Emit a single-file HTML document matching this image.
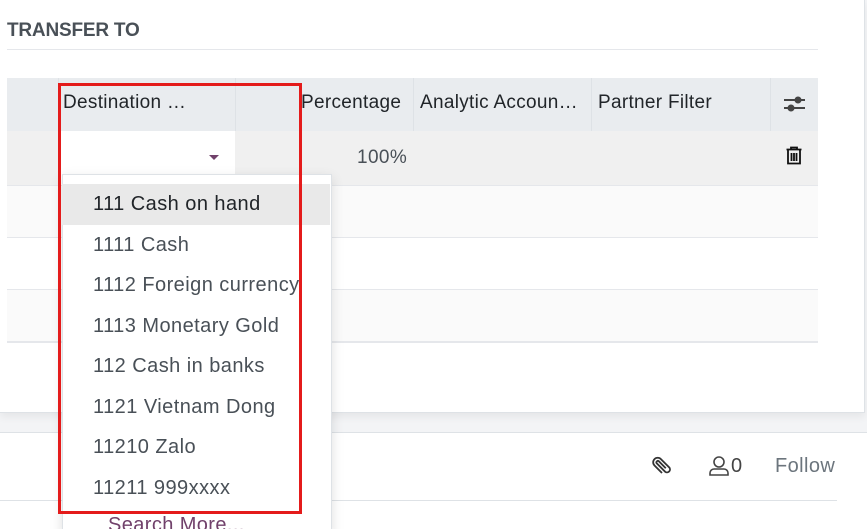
<!DOCTYPE html><html><head><style>
html,body{margin:0;width:867px;height:529px;overflow:hidden}
body{background:#f3f4f6;font-family:"Liberation Sans",sans-serif;position:relative}
.a{position:absolute}
.sheet{left:0;top:0;width:864px;height:412px;background:#fff;border-right:1px solid #dee2e6;border-bottom:1px solid #dee2e6;box-shadow:0 4px 8px rgba(0,0,0,.06)}
.t{font-size:19px;color:#212529}
.hd{font-size:19px;color:#212529;top:92px;letter-spacing:0.3px}
.it{left:62px;width:268px;height:40.5px;line-height:40.5px;padding-left:31px;box-sizing:border-box;font-size:20px;letter-spacing:0.45px;color:#495057;white-space:nowrap}
</style></head><body>
<div class="a sheet"></div>
<div class="a" style="left:7px;top:20px;font-size:19px;font-weight:bold;color:#495057;letter-spacing:-0.2px">TRANSFER TO</div>
<div class="a" style="left:7px;top:49px;width:811px;height:1px;background:#e5e7eb"></div>
<div class="a" style="left:7px;top:78px;width:811px;height:53px;background:#e9ecef"></div>
<div class="a" style="left:58px;top:78px;width:1px;height:53px;background:#dee2e6"></div>
<div class="a" style="left:235px;top:78px;width:1px;height:53px;background:#dee2e6"></div>
<div class="a" style="left:413px;top:78px;width:1px;height:53px;background:#dee2e6"></div>
<div class="a" style="left:591px;top:78px;width:1px;height:53px;background:#dee2e6"></div>
<div class="a" style="left:770px;top:78px;width:1px;height:53px;background:#dee2e6"></div>
<div class="a hd" style="left:63px">Destination …</div>
<div class="a hd" style="left:301px">Percentage</div>
<div class="a hd" style="left:420px">Analytic Accoun…</div>
<div class="a hd" style="left:598px">Partner Filter</div>
<svg class="a" style="left:783px;top:93px" width="23" height="22" viewBox="0 0 23 22"><path d="M1 7h21M1 15h21" stroke="#444" stroke-width="2"/><circle cx="15" cy="7" r="3.5" fill="#444"/><circle cx="8" cy="15" r="3.5" fill="#444"/></svg>
<div class="a" style="left:7px;top:131px;width:811px;height:54px;background:#f0f0f0;border-bottom:1px solid #e5e7eb"></div>
<div class="a" style="left:59px;top:131px;width:176px;height:54px;background:#fff"></div>
<div class="a" style="left:209px;top:155px;border-left:5px solid transparent;border-right:5px solid transparent;border-top:5px solid #71416b"></div>
<div class="a t" style="left:357px;top:147px;color:#495057;letter-spacing:0.4px">100%</div>
<svg class="a" style="left:785px;top:146px" width="18" height="20" viewBox="0 0 18 20"><path d="M6 3V1.5h6V3M1.5 3.5h15M3 4v13.5h12V4M6.5 7v8M9 7v8M11.5 7v8" fill="none" stroke="#111" stroke-width="1.8"/></svg>
<div class="a" style="left:7px;top:186px;width:811px;height:51px;background:#fafafa;border-bottom:1px solid #e5e7eb"></div>
<div class="a" style="left:7px;top:238px;width:811px;height:51px;background:#fff;border-bottom:1px solid #e5e7eb"></div>
<div class="a" style="left:7px;top:290px;width:811px;height:51px;background:#fafafa;border-bottom:2px solid #e5e7eb"></div>
<div class="a" style="left:0;top:432px;width:867px;height:97px;background:#fff;border-top:1px solid #dee2e6"></div>
<div class="a" style="left:0;top:500px;width:837px;height:1px;background:#dee2e6"></div>
<svg class="a" style="left:650px;top:453px" width="24" height="24" viewBox="0 0 24 24"><path d="M20 12l-7.5 7.5a4.5 4.5 0 0 1-6.4-6.4l8.5-8.5a3 3 0 0 1 4.2 4.2l-8.5 8.5a1.5 1.5 0 0 1-2.1-2.1l7-7" fill="none" stroke="#333" stroke-width="1.8" transform="rotate(90 12 12)"/></svg>
<svg class="a" style="left:708px;top:455px" width="22" height="22" viewBox="0 0 22 22"><circle cx="11" cy="7" r="5" fill="none" stroke="#444" stroke-width="1.6"/><path d="M2 20v-2a4 4 0 0 1 4-4h10a4 4 0 0 1 4 4v2z" fill="none" stroke="#444" stroke-width="1.6"/></svg>
<div class="a" style="left:731px;top:455px;font-size:20px;color:#444">0</div>
<div class="a" style="left:775px;top:455px;font-size:20px;color:#6c757d;letter-spacing:0.4px">Follow</div>
<div class="a" style="left:62px;top:174px;width:268px;height:360px;background:#fff;border:1px solid #dee2e6;box-shadow:0 4px 12px rgba(0,0,0,.12)"></div>
<div class="a it" style="top:184px;background:#e9e9e9;color:#212529">111 Cash on hand</div>
<div class="a it" style="top:224.5px">1111 Cash</div>
<div class="a it" style="top:265px">1112 Foreign currency</div>
<div class="a it" style="top:305.5px">1113 Monetary Gold</div>
<div class="a it" style="top:346px">112 Cash in banks</div>
<div class="a it" style="top:386.5px">1121 Vietnam Dong</div>
<div class="a it" style="top:427px">11210 Zalo</div>
<div class="a it" style="top:467.5px">11211 999xxxx</div>
<div class="a" style="left:108px;top:514px;font-size:20px;color:#71416b;letter-spacing:0.4px">Search More...</div>
<div class="a" style="left:58px;top:83px;width:238px;height:425px;border:3px solid #e41b1b"></div>
</body></html>
